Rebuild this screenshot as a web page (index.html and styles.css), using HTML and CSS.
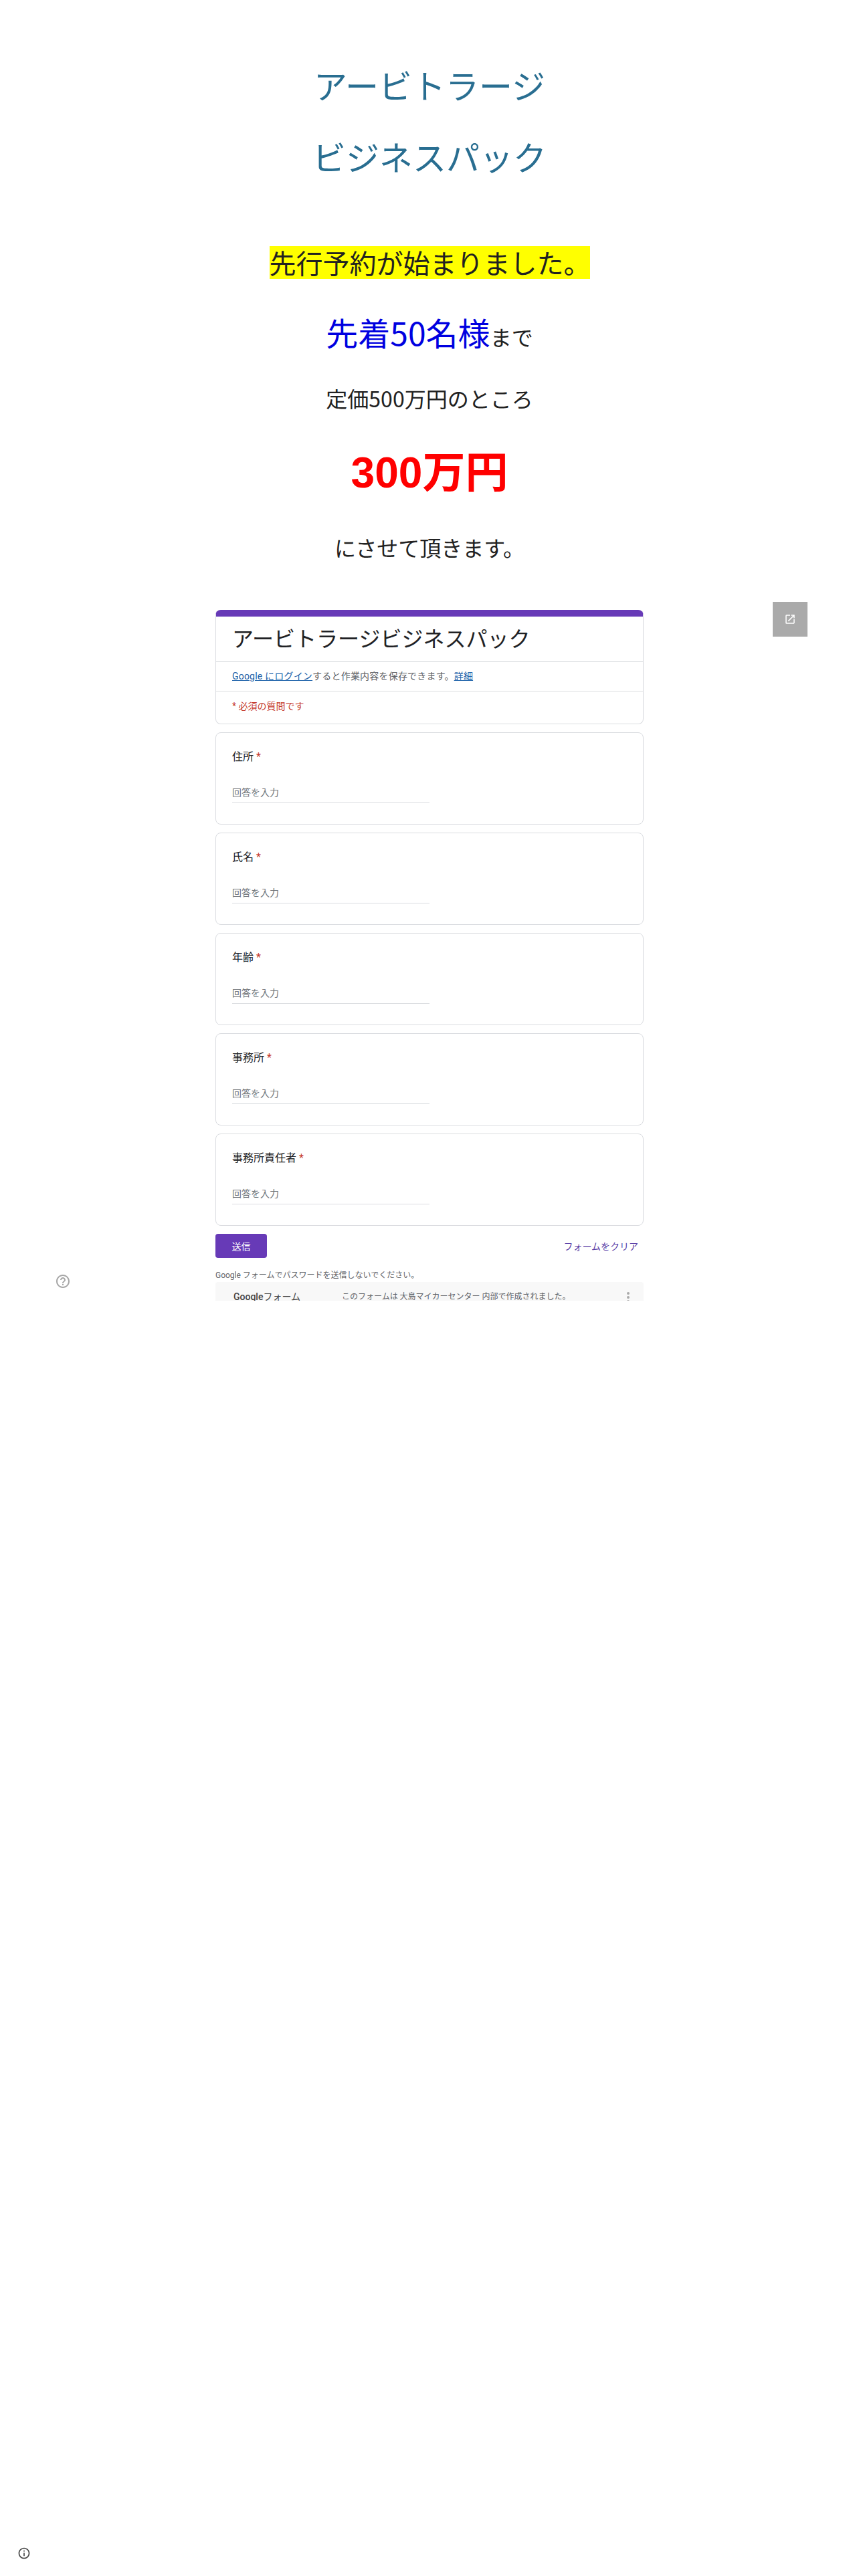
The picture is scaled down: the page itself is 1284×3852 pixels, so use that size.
FILE: index.html
```html
<!DOCTYPE html>
<html lang="ja">
<head>
    <meta charset="UTF-8">
    <meta name="viewport" content="width=device-width, initial-scale=1.0">
    <title>アービトラージビジネスパック</title>
    <link rel="stylesheet" href="styles.css">
</head>
<body>
    <div class="intro">
        <h2 class="page-title">アービトラージ</h2>
        <h2 class="page-title">ビジネスパック</h2>
        <p class="notice"><span class="highlight">先行予約が始まりました。</span></p>
        <p class="limit"><span class="limit-big">先着50名様</span>まで</p>
        <p class="line price-from">定価500万円のところ</p>
        <p class="price-now">300万円</p>
        <p class="line price-end">にさせて頂きます。</p>
    </div>

    <div class="form-frame">
        <div class="card head-card">
            <div class="form-title">アービトラージビジネスパック</div>
            <div class="login-row"><a href="#">Google にログイン</a>すると作業内容を保存できます。<a href="#">詳細</a></div>
            <div class="required-row">* 必須の質問です</div>
        </div>

        <div class="card question">
            <div class="question-label">住所 <span class="star">*</span></div>
            <div class="answer">回答を入力</div>
        </div>
        <div class="card question">
            <div class="question-label">氏名 <span class="star">*</span></div>
            <div class="answer">回答を入力</div>
        </div>
        <div class="card question">
            <div class="question-label">年齢 <span class="star">*</span></div>
            <div class="answer">回答を入力</div>
        </div>
        <div class="card question">
            <div class="question-label">事務所 <span class="star">*</span></div>
            <div class="answer">回答を入力</div>
        </div>
        <div class="card question">
            <div class="question-label">事務所責任者 <span class="star">*</span></div>
            <div class="answer">回答を入力</div>
        </div>

        <div class="actions">
            <button type="button" class="send">送信</button>
            <a href="#" class="clear">フォームをクリア</a>
        </div>
        <div class="password-note">Google フォームでパスワードを送信しないでください。</div>
        <div class="form-footer">
            <span class="footer-brand"><b>Google</b>フォーム</span>
            <span class="footer-text">このフォームは 大島マイカーセンター 内部で作成されました。</span>
            <span class="footer-dots"></span>
        </div>
    </div>

    <a href="#" class="open-button">
        <svg width="18" height="18" viewBox="0 0 24 24"><path fill="#fff" d="M19 19H5V5h7V3H5a2 2 0 0 0-2 2v14a2 2 0 0 0 2 2h14c1.1 0 2-.9 2-2v-7h-2v7zM14 3v2h3.59l-9.83 9.83 1.41 1.41L19 6.41V10h2V3h-7z"/></svg>
    </a>
    <svg class="help-icon" width="24" height="24" viewBox="0 0 24 24"><path fill="#a6a6a6" d="M11 18h2v-2h-2v2zm1-16C6.48 2 2 6.48 2 12s4.48 10 10 10 10-4.48 10-10S17.52 2 12 2zm0 18c-4.41 0-8-3.59-8-8s3.59-8 8-8 8 3.59 8 8-3.59 8-8 8zm0-14c-2.21 0-4 1.79-4 4h2c0-1.1.9-2 2-2s2 .9 2 2c0 2-3 1.75-3 5h2c0-2.25 3-2.5 3-5 0-2.21-1.79-4-4-4z"/></svg>
    <svg class="info-icon" width="20" height="20" viewBox="0 0 24 24"><path fill="#444" d="M11 7h2v2h-2zm0 4h2v6h-2zm1-9C6.48 2 2 6.48 2 12s4.48 10 10 10 10-4.48 10-10S17.52 2 12 2zm0 18c-4.41 0-8-3.59-8-8s3.59-8 8-8 8 3.59 8 8-3.59 8-8 8z"/></svg>
</body>
</html>
```

FILE: styles.css
```css
body {
    font-family: "Noto Sans CJK JP", "Noto Sans", sans-serif;
    margin: 0;
    padding: 0;
    background-color: #fff;
    color: #212121;
    position: relative;
    min-height: 3852px;
    overflow: hidden;
}

a {
    color: #1a5fa8;
}

.intro {
    padding-top: 91px;
    text-align: center;
}

.page-title {
    margin: 0 0 37px;
    font-size: 50px;
    font-weight: 400;
    line-height: 70px;
    color: #296e91;
}

.notice {
    margin: 100px 0 0;
    height: 49px;
    font-size: 40px;
    line-height: 49px;
}

.highlight {
    display: inline-block;
    width: 479px;
    height: 49px;
    text-align: left;
    white-space: nowrap;
    background-color: #ff0;
}

.limit {
    margin: 44px 0 0;
    height: 70px;
    font-size: 32px;
    line-height: 70px;
}

.limit-big {
    font-size: 48px;
    color: #0000e0;
}

.line {
    font-size: 32px;
    line-height: 46px;
}

.price-from {
    margin: 41px 0 0;
}

.price-now {
    margin: 44px 0 0;
    font-family: "Liberation Sans", "Noto Sans CJK JP", sans-serif;
    font-size: 64px;
    font-weight: 700;
    line-height: 90px;
    color: #f00;
}

.price-end {
    margin: 43px 0 0;
}

.form-frame {
    width: 640px;
    height: 1033px;
    margin: 71px auto 0;
    overflow: hidden;
    font-family: Roboto, "Noto Sans CJK JP", sans-serif;
}

.card {
    background-color: #fff;
    border: 1px solid #dadce0;
    border-radius: 8px;
    box-sizing: border-box;
    margin-bottom: 12px;
}

.head-card {
    height: 171px;
    border-top: 10px solid #673ab7;
}

.form-title {
    height: 68px;
    box-sizing: border-box;
    padding: 12px 24px 0;
    font-size: 32px;
    line-height: 44px;
    color: #202124;
    border-bottom: 1px solid #dadce0;
}

.login-row {
    height: 44px;
    box-sizing: border-box;
    padding: 0 24px;
    font-size: 14px;
    letter-spacing: 0.2px;
    line-height: 43px;
    color: #5f6368;
    border-bottom: 1px solid #dadce0;
}

.required-row {
    padding: 0 24px;
    font-size: 14px;
    line-height: 44px;
    color: #c5392b;
}

.question {
    height: 138px;
    padding: 24px 24px 0;
}

.question-label {
    font-size: 16px;
    line-height: 24px;
    color: #202124;
}

.star {
    color: #c5392b;
}

.answer {
    width: 295px;
    height: 32px;
    margin-top: 24px;
    font-size: 14px;
    line-height: 35px;
    color: #70757a;
    border-bottom: 1px solid #dadce0;
    box-sizing: content-box;
}

.actions {
    display: flex;
    justify-content: space-between;
    align-items: center;
    padding-right: 8px;
}

.send {
    width: 77px;
    height: 36px;
    padding: 0;
    font-family: inherit;
    font-size: 14px;
    color: #fff;
    background-color: #673ab7;
    border: none;
    border-radius: 4px;
}

.clear {
    font-size: 14px;
    color: #5a3ea6;
    text-decoration: none;
}

.password-note {
    margin-top: 16px;
    font-size: 12px;
    line-height: 20px;
    color: #5f6368;
}

.form-footer {
    display: flex;
    height: 60px;
    padding: 10px 20px 0 27px;
    background-color: #f8f8f8;
    border-radius: 4px 4px 0 0;
    font-size: 12px;
    color: #5f6368;
    line-height: 24px;
    position: relative;
}

.footer-brand {
    width: 162px;
    font-size: 14px;
    color: #444;
}

.footer-brand b {
    font-weight: 500;
}

.footer-dots {
    position: absolute;
    left: 615px;
    top: 15px;
    width: 4px;
    height: 4px;
    border-radius: 50%;
    background-color: #aaa;
    box-shadow: 0 6px 0 #aaa, 0 12px 0 #aaa;
}

.open-button {
    position: absolute;
    left: 1155px;
    top: 900px;
    width: 52px;
    height: 52px;
    display: flex;
    align-items: center;
    justify-content: center;
    background-color: #aaa;
}

.help-icon {
    position: absolute;
    left: 82px;
    top: 1904px;
}

.info-icon {
    position: absolute;
    left: 26px;
    top: 3808px;
}
```
